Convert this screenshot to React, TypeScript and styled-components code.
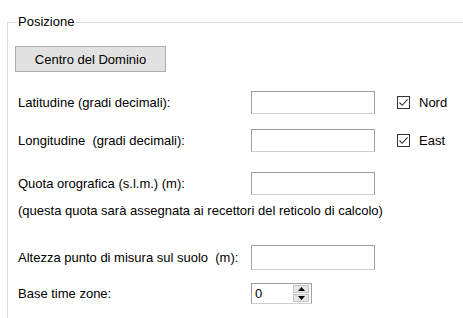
import * as React from 'react'
import styled, { createGlobalStyle } from 'styled-components'

const Global = createGlobalStyle`
  html, body {
    margin: 0;
    padding: 0;
    background: #ffffff;
  }
  body {
    font-family: "Liberation Sans", Arial, sans-serif;
    font-size: 13px;
    color: #000000;
  }
`

const Group = styled.fieldset`
  margin: 14px 0 0 7px;
  padding: 0 0 20px 0;
  border: none;
  border-top: 1px solid #dcdcdc;
  border-left: 1px solid #dcdcdc;
  min-height: 290px;
  box-sizing: border-box;
`

const Legend = styled.legend`
  margin-left: 8px;
  padding: 0 2px;
  line-height: 16px;
  color: #000;
`

const Button = styled.button`
  display: block;
  margin: 16px 0 0 7px;
  width: 151px;
  height: 26px;
  padding: 0;
  border: 1px solid #adadad;
  background: #e1e1e1;
  font: inherit;
  color: #000;
`

const Row = styled.div<{ $mt: number }>`
  display: grid;
  grid-template-columns: 233px 124px 22px auto;
  align-items: center;
  margin-top: ${p => p.$mt}px;
  padding-left: 10px;
`

const Label = styled.span`
  white-space: pre;
`

const Input = styled.div<{ $h?: number }>`
  height: ${p => p.$h ?? 23}px;
  box-sizing: border-box;
  border: 1px solid #a0a0a0;
  border-bottom-color: #cfcfcf;
  background: #fff;
`

const Check = styled.span`
  display: flex;
  align-items: center;
  gap: 9px;
`

const Box = styled.span`
  width: 13px;
  height: 13px;
  box-sizing: border-box;
  border: 1px solid #333333;
  background: #fff;
  display: flex;
  align-items: center;
  justify-content: center;
`

const Note = styled.div`
  margin-top: 7px;
  padding-left: 10px;
  line-height: 17px;
`

const Spinner = styled.div`
  width: 61px;
  height: 21px;
  box-sizing: border-box;
  border: 1px solid #a0a0a0;
  border-bottom-color: #cfcfcf;
  display: flex;
  align-items: center;
  justify-content: space-between;
  padding: 1px 2px 1px 3px;
`

const SpinValue = styled.span`
  line-height: 16px;
`

const SpinButtons = styled.div`
  width: 16px;
  height: 17px;
  display: flex;
  flex-direction: column;
  gap: 1px;
`

const SpinHalf = styled.div`
  flex: 1;
  background: #e6e6e6;
  border: 1px solid #c4c4c4;
  display: flex;
  align-items: center;
  justify-content: center;
`

const Tick = () => (
  <svg width="11" height="11" viewBox="0 0 11 11">
    <path d="M1.5 5.5 L4.2 8.3 L9.6 2.4" fill="none" stroke="#333" strokeWidth="1.1" />
  </svg>
)

const Arrow = ({ up }: { up?: boolean }) => (
  <svg width="7" height="4" viewBox="0 0 7 4">
    <path d={up ? 'M0 4 L3.5 0 L7 4 Z' : 'M0 0 L3.5 4 L7 0 Z'} fill="#000" />
  </svg>
)

const App: React.FC = () => {
  return (
    <>
      <Global />
      <Group>
        <Legend>Posizione</Legend>
        <Button>Centro del Dominio</Button>
        <Row $mt={19}>
          <Label>Latitudine (gradi decimali):</Label>
          <Input />
          <span />
          <Check>
            <Box><Tick /></Box>
            <span>Nord</span>
          </Check>
        </Row>
        <Row $mt={15}>
          <Label>Longitudine  (gradi decimali):</Label>
          <Input />
          <span />
          <Check>
            <Box><Tick /></Box>
            <span>East</span>
          </Check>
        </Row>
        <Row $mt={20}>
          <Label>Quota orografica (s.l.m.) (m):</Label>
          <Input />
        </Row>
        <Note>(questa quota sarà assegnata ai recettori del reticolo di calcolo)</Note>
        <Row $mt={26}>
          <Label>Altezza punto di misura sul suolo  (m):</Label>
          <Input $h={25} />
        </Row>
        <Row $mt={13}>
          <Label>Base time zone:</Label>
          <Spinner>
            <SpinValue>0</SpinValue>
            <SpinButtons>
              <SpinHalf><Arrow up /></SpinHalf>
              <SpinHalf><Arrow /></SpinHalf>
            </SpinButtons>
          </Spinner>
        </Row>
      </Group>
    </>
  )
}

export default App
